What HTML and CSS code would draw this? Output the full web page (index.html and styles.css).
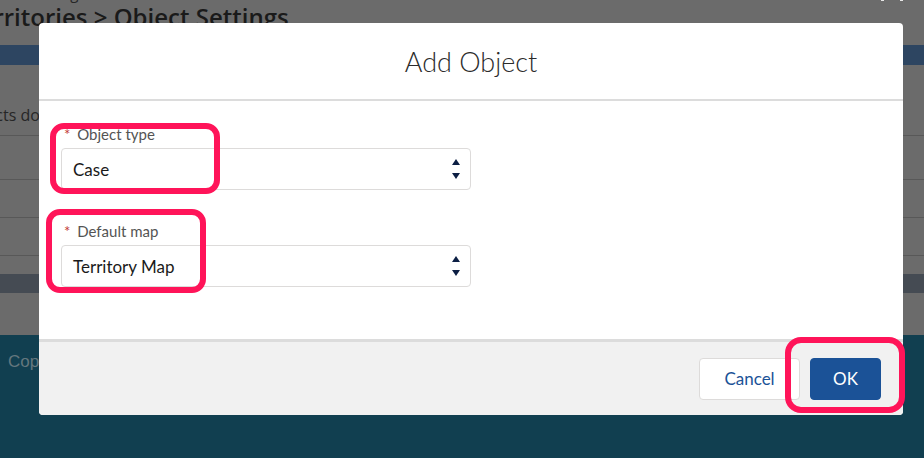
FILE: index.html
```html
<!DOCTYPE html>
<html lang="en">
<head>
<meta charset="utf-8">
<title>Add Object</title>
<link rel="stylesheet" href="styles.css">
</head>
<body>
<div class="page">
  <div class="crumb"><span class="crumb-text">Settings</span></div>
  <h1 class="page-title">Territories &gt; Object Settings</h1>
  <div class="close-dots"><span></span><span></span></div>
  <div class="band"></div>
  <div class="content">
    <p class="intro">Objects do not appear in the list until you add them.</p>
    <div class="row"></div>
    <div class="row r2"></div>
    <div class="row r3"></div>
    <div class="row r4"></div>
    <div class="table-foot"></div>
  </div>
  <footer class="site-foot">
    <span class="copy">Copyright 2000-2020 salesforce.com, inc. All rights reserved.</span>
    <a class="foot-link">Contact</a>
  </footer>
</div>

<div class="modal" role="dialog" aria-label="Add Object">
  <header class="modal-head">
    <h2 class="modal-title">Add Object</h2>
  </header>
  <div class="modal-body">
    <div class="field f1">
      <label class="field-label"><abbr class="req">*</abbr> Object type</label>
      <div class="select">
        <span class="select-value">Case</span>
        <svg class="arrows" width="10" height="22" viewBox="0 0 10 22"><path d="M5 1 L9 7 L1 7 Z" fill="#0c1f44"/><path d="M1 15 L9 15 L5 21 Z" fill="#0c1f44"/></svg>
      </div>
      <span class="hl hl1"></span>
    </div>
    <div class="field f2">
      <label class="field-label"><abbr class="req">*</abbr> Default map</label>
      <div class="select">
        <span class="select-value">Territory Map</span>
        <svg class="arrows" width="10" height="22" viewBox="0 0 10 22"><path d="M5 1 L9 7 L1 7 Z" fill="#0c1f44"/><path d="M1 15 L9 15 L5 21 Z" fill="#0c1f44"/></svg>
      </div>
      <span class="hl hl2"></span>
    </div>
  </div>
  <footer class="modal-foot">
    <button class="btn btn-neutral">Cancel</button>
    <button class="btn btn-brand">OK<span class="hl hl3"></span></button>
  </footer>
</div>
</body>
</html>
```
FILE: styles.css
```css
html, body {
  margin: 0;
  padding: 0;
}
body {
  width: 924px;
  height: 458px;
  overflow: hidden;
  background: #6b6b6b;
  font-family: Lato, "Open Sans", sans-serif;
}
.page {
  position: relative;
  height: 458px;
  overflow: hidden;
}
.crumb {
  height: 4px;
  overflow: hidden;
  padding-left: 30px;
}
.crumb-text {
  display: block;
  margin-top: -17px;
  font-family: "Open Sans", sans-serif;
  font-size: 15px;
  line-height: 20px;
  color: #262626;
}
.page-title {
  margin: 0 0 0 -34px;
  height: 41px;
  font-family: "Open Sans", sans-serif;
  font-size: 24px;
  font-weight: 600;
  line-height: 25px;
  color: #1a1a1a;
  white-space: nowrap;
}
.close-dots {
  position: absolute;
  top: -2px;
  left: 881px;
  display: flex;
  gap: 16px;
}
.close-dots span {
  width: 3px;
  height: 3px;
  background: #e8e8e8;
}
.band {
  height: 20px;
  background: #2d4561;
}
.content {
  height: 270px;
}
.intro {
  margin: 0 0 0 -40px;
  height: 70px;
  padding-top: 40px;
  box-sizing: border-box;
  font-family: "Open Sans", sans-serif;
  font-size: 16px;
  line-height: 20px;
  color: #262626;
  white-space: nowrap;
}
.row {
  height: 44px;
  border-top: 1px solid #585858;
  box-sizing: border-box;
}
.row.r2 { height: 38px; }
.row.r3 { height: 38px; }
.row.r4 { height: 19px; }
.table-foot {
  height: 19px;
  background: #454b53;
}
.site-foot {
  height: 123px;
  background: #113f50;
  display: flex;
  justify-content: space-between;
  padding: 17px 0 0 8px;
  box-sizing: border-box;
  font-family: "Liberation Sans", Arial, sans-serif;
  font-size: 17px;
  color: #64777e;
  white-space: nowrap;
  overflow: hidden;
}
.foot-link {
  margin-right: -60px;
  text-decoration: underline;
}

/* modal */
.modal {
  position: fixed;
  left: 39px;
  top: 23px;
  width: 864px;
  background: #fff;
  border-radius: 4px;
}
.modal-head {
  height: 76px;
  border-bottom: 2px solid #dcdcdc;
  display: flex;
  align-items: center;
  justify-content: center;
}
.modal-title {
  margin: 0;
  padding-top: 1px;
  font-family: Lato, sans-serif;
  font-size: 27px;
  font-weight: 300;
  color: #2b2b2b;
}
.modal-body {
  height: 238px;
  padding: 24px 0 0 22px;
  box-sizing: border-box;
}
.field {
  position: relative;
  width: 410px;
}
.field.f2 {
  margin-top: 32px;
}
.field-label {
  display: block;
  height: 23px;
  font-size: 15px;
  line-height: 18px;
  color: #545454;
  padding-left: 3px;
}
.req {
  text-decoration: none;
  color: #c23934;
  margin-right: 3px;
}
.select {
  height: 42px;
  border: 1px solid #dddbda;
  border-radius: 4px;
  box-sizing: border-box;
  display: flex;
  align-items: center;
  justify-content: space-between;
  padding: 0 9px 0 11px;
}
.select-value {
  font-size: 17px;
  color: #1a1a1a;
}
.arrows {
  display: block;
}
.hl {
  position: absolute;
  border: 6px solid #ff1459;
  border-radius: 14px;
  box-sizing: border-box;
  pointer-events: none;
}
.hl1 {
  left: -11px;
  top: -2px;
  width: 170px;
  height: 71px;
}
.hl2 {
  left: -15px;
  top: -13px;
  width: 160px;
  height: 84px;
}
.modal-foot {
  height: 76px;
  border-top: 3px solid #dcdcdc;
  box-sizing: border-box;
  background: #f1f1f1;
  border-radius: 0 0 4px 4px;
  display: flex;
  justify-content: flex-end;
  align-items: center;
  gap: 10px;
  padding: 0 22px 0 0;
}
.btn {
  position: relative;
  height: 42px;
  border-radius: 4px;
  font-family: Lato, sans-serif;
  font-size: 17px;
  box-sizing: border-box;
  cursor: pointer;
}
.btn-neutral {
  width: 101px;
  background: #fff;
  border: 1px solid #dddbda;
  color: #1b5297;
}
.btn-brand {
  width: 71px;
  background: #1b5297;
  border: 1px solid #1b5297;
  color: #fff;
}
.hl3 {
  left: -26px;
  top: -22px;
  width: 120px;
  height: 76px;
  border-radius: 16px;
}
```
